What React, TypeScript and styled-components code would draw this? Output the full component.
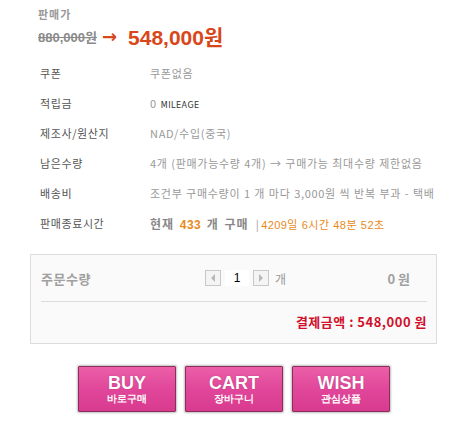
import React from "react";
import styled, { createGlobalStyle } from "styled-components";

const Global = createGlobalStyle`
  html, body { margin: 0; padding: 0; background: #fff; }
  body { font-family: "Noto Sans CJK KR", "Noto Sans", sans-serif; }
`;

const Page = styled.div`
  width: 469px;
  height: 422px;
  padding: 6px 0 0 0;
  box-sizing: border-box;
`;

const PriceBlock = styled.div`
  padding-left: 38px;
  display: flex;
  flex-direction: column;
  gap: 1px;
`;

const PriceLabel = styled.div`
  font-size: 11px;
  font-weight: 700;
  color: #999;
  line-height: 16px;
  letter-spacing: 1px;
`;

const PriceLine = styled.div`
  display: flex;
  align-items: center;
  height: 26px;
`;

const OldPrice = styled.span`
  font-size: 13px;
  font-weight: 700;
  color: #8a8a8a;
  text-decoration: line-through;
  font-family: "Liberation Sans", "Noto Sans CJK KR", sans-serif;
`;

const Arrow = styled.span`
  font-size: 18px;
  font-weight: 700;
  color: #d9461a;
  margin: 0 11px 0 5px;
  font-family: "DejaVu Sans", sans-serif;
`;

const NewPrice = styled.span`
  font-size: 21px;
  font-weight: 700;
  color: #d9461a;
  font-family: "Liberation Sans", "Noto Sans CJK KR", sans-serif;
`;

const InfoTable = styled.div`
  margin-top: 9px;
  padding-left: 40px;
  display: flex;
  flex-direction: column;
`;

const InfoRow = styled.div`
  display: grid;
  grid-template-columns: 110px 1fr;
  align-items: center;
  height: 30px;
  font-size: 11px;
`;

const Label = styled.span`
  color: #555;
  letter-spacing: 0.6px;
`;

const Value = styled.span`
  color: #999;
  white-space: nowrap;
  letter-spacing: 0.7px;
  word-spacing: 0.5px;
`;

const Mileage = styled.span`
  font-size: 8px;
  color: #333;
  margin-left: 4px;
  letter-spacing: 0.5px;
  font-family: "DejaVu Sans", sans-serif;
`;

const Strong = styled.span`
  font-weight: 700;
  color: #888;
  font-size: 12px;
  letter-spacing: 1px;
  word-spacing: 2px;
`;

const Orange = styled.span<{ $bold?: boolean }>`
  color: #e88a1a;
  font-weight: ${(p) => (p.$bold ? 700 : 400)};
  font-family: "Liberation Sans", "Noto Sans CJK KR", sans-serif;
  letter-spacing: 0.4px;
`;

const Sep = styled.span`
  color: #999;
  margin: 0 2px 0 7px;
`;

const OrderBox = styled.div`
  margin: 16px 0 0 30px;
  width: 407px;
  height: 90px;
  box-sizing: border-box;
  border: 1px solid #dcdcdc;
  background: #fafafa;
  padding: 0 9px 0 10px;
  display: flex;
  flex-direction: column;
`;

const QtyRow = styled.div`
  display: grid;
  grid-template-columns: 164px 1fr auto;
  align-items: center;
  height: 46px;
  border-bottom: 1px solid #dcdcdc;
  padding-right: 17px;
`;

const QtyLabel = styled.span`
  font-size: 13px;
  font-weight: 700;
  color: #a0a0a0;
  letter-spacing: 0.5px;
`;

const QtyControl = styled.div`
  display: flex;
  align-items: center;
  gap: 4px;
`;

const StepBtn = styled.button`
  width: 16px;
  height: 16px;
  padding: 0;
  border: 1px solid #c8c8c8;
  background: #f4f4f4;
  display: flex;
  align-items: center;
  justify-content: center;
`;

const QtyInput = styled.div`
  width: 24px;
  height: 16px;
  background: #fff;
  font-size: 12px;
  color: #000;
  display: flex;
  align-items: center;
  justify-content: center;
  font-family: "Liberation Sans", sans-serif;
`;

const Unit = styled.span`
  font-size: 12px;
  color: #999;
  margin-left: 2px;
`;

const Zero = styled.span`
  font-size: 13px;
  font-weight: 700;
  color: #a0a0a0;
`;

const TotalRow = styled.div`
  flex: 1;
  display: flex;
  align-items: center;
  justify-content: flex-end;
  padding-bottom: 3px;
  font-size: 13px;
  font-weight: 700;
  color: #d0102b;
  letter-spacing: 0.5px;
`;

const Buttons = styled.div`
  margin: 22px 0 0 78px;
  display: flex;
  gap: 9px;
`;

const BigBtn = styled.button`
  width: 98px;
  height: 46px;
  box-sizing: border-box;
  border: 1px solid #8c2d5a;
  border-radius: 1px;
  background: linear-gradient(#ec5fa8, #e0479a 50%, #d83a8e);
  box-shadow: 0 0 2px 1px rgba(0, 0, 0, 0.25);
  display: flex;
  flex-direction: column;
  align-items: center;
  justify-content: center;
  padding: 0;
  color: #fff;
  cursor: pointer;
`;

const BtnMain = styled.span`
  font-family: "Liberation Sans", sans-serif;
  font-weight: 700;
  font-size: 18px;
  line-height: 18px;
  text-shadow: 0 0 1px rgba(120, 20, 70, 0.6);
`;

const BtnSub = styled.span`
  font-weight: 700;
  font-size: 10px;
  line-height: 13px;
`;

const Tri = ({ dir }: { dir: "l" | "r" }) => (
  <svg width="6" height="8" viewBox="0 0 6 8">
    {dir === "l" ? (
      <polygon points="5,0 5,8 1,4" fill="#b8b8b8" />
    ) : (
      <polygon points="1,0 1,8 5,4" fill="#b8b8b8" />
    )}
  </svg>
);

export default function App() {
  return (
    <Page>
      <Global />
      <PriceBlock>
        <PriceLabel>판매가</PriceLabel>
        <PriceLine>
          <OldPrice>880,000원</OldPrice>
          <Arrow>→</Arrow>
          <NewPrice>548,000원</NewPrice>
        </PriceLine>
      </PriceBlock>
      <InfoTable>
        <InfoRow>
          <Label>쿠폰</Label>
          <Value>쿠폰없음</Value>
        </InfoRow>
        <InfoRow>
          <Label>적립금</Label>
          <Value>
            0<Mileage>MILEAGE</Mileage>
          </Value>
        </InfoRow>
        <InfoRow>
          <Label>제조사/원산지</Label>
          <Value>NAD/수입(중국)</Value>
        </InfoRow>
        <InfoRow>
          <Label>남은수량</Label>
          <Value>4개 (판매가능수량 4개) → 구매가능 최대수량 제한없음</Value>
        </InfoRow>
        <InfoRow>
          <Label>배송비</Label>
          <Value>조건부 구매수량이 1 개 마다 3,000원 씩 반복 부과 - 택배</Value>
        </InfoRow>
        <InfoRow>
          <Label>판매종료시간</Label>
          <Value>
            <Strong>
              현재 <Orange $bold>433</Orange> 개 구매
            </Strong>
            <Sep>|</Sep>
            <Orange>4209일 6시간 48분 52초</Orange>
          </Value>
        </InfoRow>
      </InfoTable>
      <OrderBox>
        <QtyRow>
          <QtyLabel>주문수량</QtyLabel>
          <QtyControl>
            <StepBtn aria-label="감소">
              <Tri dir="l" />
            </StepBtn>
            <QtyInput>1</QtyInput>
            <StepBtn aria-label="증가">
              <Tri dir="r" />
            </StepBtn>
            <Unit>개</Unit>
          </QtyControl>
          <Zero>0 원</Zero>
        </QtyRow>
        <TotalRow>결제금액 : 548,000 원</TotalRow>
      </OrderBox>
      <Buttons>
        <BigBtn>
          <BtnMain>BUY</BtnMain>
          <BtnSub>바로구매</BtnSub>
        </BigBtn>
        <BigBtn>
          <BtnMain>CART</BtnMain>
          <BtnSub>장바구니</BtnSub>
        </BigBtn>
        <BigBtn>
          <BtnMain>WISH</BtnMain>
          <BtnSub>관심상품</BtnSub>
        </BigBtn>
      </Buttons>
    </Page>
  );
}
